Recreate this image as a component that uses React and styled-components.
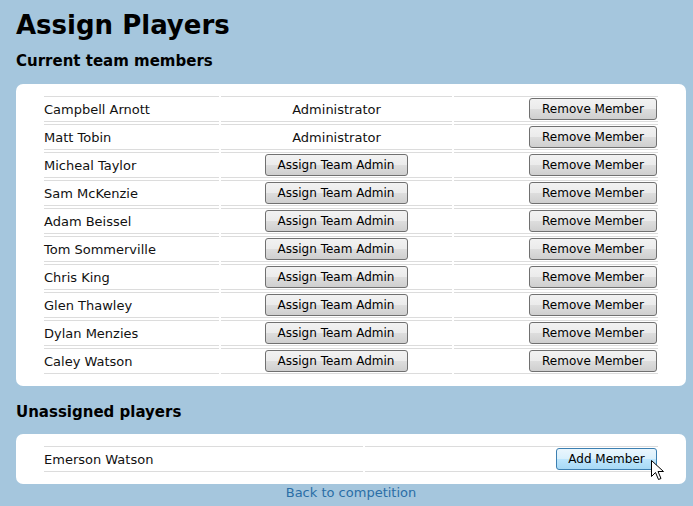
import React from 'react'
import styled, { createGlobalStyle } from 'styled-components'

const GlobalStyle = createGlobalStyle`
  html, body {
    margin: 0;
    padding: 0;
    background: #a5c6dd;
  }
  body {
    font-family: "DejaVu Sans", Verdana, sans-serif;
    color: #111;
  }
`

const members = [
  { name: 'Campbell Arnott', admin: true },
  { name: 'Matt Tobin', admin: true },
  { name: 'Micheal Taylor' },
  { name: 'Sam McKenzie' },
  { name: 'Adam Beissel' },
  { name: 'Tom Sommerville' },
  { name: 'Chris King' },
  { name: 'Glen Thawley' },
  { name: 'Dylan Menzies' },
  { name: 'Caley Watson' },
]

const Page = styled.div`
  padding: 0 7px 0 16px;
  width: 670px;
`

const Title = styled.h1`
  margin: 0;
  padding-top: 9px;
  font-size: 26px;
  line-height: 32px;
  font-weight: bold;
  color: #000;
`

const Heading = styled.h3`
  margin: 0;
  padding: ${p => p.$top}px 0 0;
  height: ${p => p.$h}px;
  box-sizing: content-box;
  font-size: 15px;
  line-height: 18px;
  font-weight: bold;
  color: #000;
`

const Panel = styled.div`
  background: #fff;
  border-radius: 7px;
  padding: 10px 0 10px 26px;
`

const Table = styled.table`
  border-collapse: separate;
  border-spacing: 2px;
  table-layout: fixed;
  width: 618px;
  font-size: 13px;
`

const Cell = styled.td`
  width: ${p => p.$w}px;
  height: 24px;
  padding: 0;
  border-top: 1px solid #dcdcdc;
  border-bottom: 1px solid #dcdcdc;
  text-align: ${p => p.$align || 'left'};
  vertical-align: middle;
  white-space: nowrap;
`

const Button = styled.button`
  font-family: Tahoma, "DejaVu Sans", sans-serif;
  font-size: 12px;
  height: 22px;
  padding: 0;
  margin: 0 1px 0 0;
  color: #000;
  border: 1px solid #707070;
  border-radius: 3px;
  background: linear-gradient(#f2f2f2 0%, #ebebeb 50%, #dddddd 51%, #cfcfcf 100%);
  cursor: pointer;
  width: ${p => p.$w}px;
  vertical-align: middle;
`

const HotButton = styled(Button)`
  border-color: #3c7fb1;
  background: linear-gradient(#eaf6fd 0%, #d9f0fc 50%, #bee6fd 51%, #a7d9f5 100%);
  position: relative;
`

const Cursor = styled.svg`
  position: absolute;
  left: 94px;
  top: 11px;
  pointer-events: none;
`

const Footer = styled.div`
  text-align: center;
  padding-top: 1px;
  font-size: 13px;
`

const BackLink = styled.a`
  color: #2a6ea6;
  text-decoration: none;
`

export default function App() {
  return (
    <Page>
      <GlobalStyle />
      <Title>Assign Players</Title>
      <Heading $top={11} $h={32}>Current team members</Heading>
      <Panel>
        <Table>
          <tbody>
            {members.map(m => (
              <tr key={m.name}>
                <Cell $w={175}>{m.name}</Cell>
                <Cell $w={231} $align="center">
                  {m.admin ? 'Administrator' : <Button $w={143}>Assign Team Admin</Button>}
                </Cell>
                <Cell $w={204} $align="right">
                  <Button $w={128}>Remove Member</Button>
                </Cell>
              </tr>
            ))}
          </tbody>
        </Table>
      </Panel>
      <Heading $top={17} $h={31}>Unassigned players</Heading>
      <Panel>
        <Table>
          <tbody>
            <tr>
              <Cell $w={319}>Emerson Watson</Cell>
              <Cell $w={293} $align="right">
                <HotButton $w={101}>
                  Add Member
                  <Cursor width="13" height="21" viewBox="0 0 13 21">
                    <path d="M0.5 0.5 L0.5 16.5 L4.5 12.5 L7.5 19.5 L10 18.5 L7 11.5 L12.5 11.5 Z" fill="#fff" stroke="#000" strokeWidth="1" strokeLinejoin="miter" />
                  </Cursor>
                </HotButton>
              </Cell>
            </tr>
          </tbody>
        </Table>
      </Panel>
      <Footer>
        <BackLink href="#">Back to competition</BackLink>
      </Footer>
    </Page>
  )
}
